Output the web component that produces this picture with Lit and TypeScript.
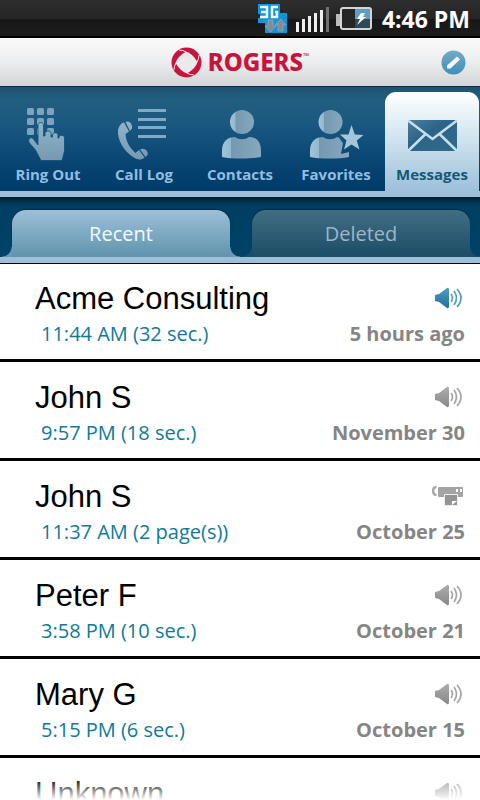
import { LitElement, html, css, svg, nothing } from "lit";
import { customElement } from "lit/decorators.js";
import { classMap } from "lit/directives/class-map.js";

type Kind = "voice" | "fax";
interface Message {
  name: string;
  detail?: string;
  date?: string;
  kind: Kind;
  unread?: boolean;
}

const MESSAGES: Message[] = [
  { name: "Acme Consulting", detail: "11:44 AM (32 sec.)", date: "5 hours ago", kind: "voice", unread: true },
  { name: "John S", detail: "9:57 PM (18 sec.)", date: "November 30", kind: "voice" },
  { name: "John S", detail: "11:37 AM (2 page(s))", date: "October 25", kind: "fax" },
  { name: "Peter F", detail: "3:58 PM (10 sec.)", date: "October 21", kind: "voice" },
  { name: "Mary G", detail: "5:15 PM (6 sec.)", date: "October 15", kind: "voice" },
  { name: "Unknown", kind: "voice" },
];

const pale = svg`<defs>
  <linearGradient id="p" x1="0" y1="0" x2="0" y2="1"><stop offset="0" stop-color="#8fb4cb"/><stop offset="1" stop-color="#7699b0"/></linearGradient>
  <linearGradient id="s" x1="0" y1="0" x2="1" y2="0"><stop offset="0" stop-color="#9fc3d9"/><stop offset=".22" stop-color="#94b9cf"/><stop offset=".24" stop-color="#7599b1"/><stop offset="1" stop-color="#86a8bd"/></linearGradient>
</defs>`;

const NAV = [
  {
    label: "Ring Out",
    icon: svg`${pale}
      <g fill="#7da3bd">
        ${[0, 10, 20].map((y) => [0, 10, 20].map((x) => svg`<rect x=${4 + x} y=${3 + y} width="7" height="7" rx="1.5"/>`))}
      </g>
      <path fill="url(#p)" stroke="#0f4c74" stroke-width=".8" d="M15 40V20.500C15 16.500 20.500 16.500 20.500 20.500V31H22V28.500C22 25 28 25 28 28.500V32H29.500V30C29.500 27 35 27 35 30V33H36V32.500C36 29.500 41.500 29.500 41.500 33V46L39 55.500H18L12.500 45L6.500 38C4 34.500 7.500 31.500 10 33.500Z"/>`,
  },
  {
    label: "Call Log",
    icon: svg`${pale}
      <g fill="#7fa9c8"><path d="M19 4h28v3H19zM19 13h28v3H19zM19 21h28v3H19zM19 30h28v3H19z"/></g>
      <g fill="url(#p)">
        <path d="M-1 25C0 21 2 18 5 17.500L10 26.500L6.500 29C7 37 11 43 16.500 48L20 45L25.500 52.500C22 55.500 18 55 14 52C5 46-2 35-1 25Z"/>
        <path d="M6.500 17C10 15 14 19 13 23.500L11 26ZM21 44.500C25 42 30 46 28.500 50L26.500 52Z"/>
      </g>`,
  },
  {
    label: "Contacts",
    icon: svg`${pale}
      <circle cx="27" cy="17" r="12" fill="url(#s)"/>
      <path fill="url(#s)" d="M7 52V46C7 36 13 32 20 32C24 35 30 35 34 32C41 32 46 36 46 46V52C36 54 17 54 7 52Z"/>`,
  },
  {
    label: "Favorites",
    icon: svg`${pale}
      <circle cx="19.500" cy="17" r="12" fill="url(#s)"/>
      <path fill="url(#s)" d="M-1 52V46C-1 36 5 32 12 32C16 35 22 35 26 32C29 32 29 35 32 38L30 49L38 47V52C28 54 9 54-1 52Z"/>
      <path fill="#a5c5dc" d="M40.500 20L43.800 29.500L52.500 30L45.800 35.500L48.500 44.500L40.500 39.500L33 44.500L35.500 35.500L29 29.500L37.500 29.500Z"/>`,
  },
  {
    label: "Messages",
    icon: svg`<defs><linearGradient id="e" x1="0" y1="0" x2="1" y2="1"><stop offset="0" stop-color="#4f7f9e"/><stop offset=".4" stop-color="#2c6488"/><stop offset="1" stop-color="#34698d"/></linearGradient></defs>
      <rect x="1" y="15" width="49" height="31" fill="url(#e)"/>
      <path d="M1 15.500L25.500 34L50 15.500M1 46L18.500 29M50 46L32.500 29" fill="none" stroke="#c5e0ef" stroke-width="2.500"/>`,
  },
];

@customElement("status-bar")
class StatusBar extends LitElement {
  static styles = css`
    :host {
      display: flex;
      flex: none;
      align-items: center;
      justify-content: flex-end;
      height: 38px;
      padding-right: 10px;
      box-sizing: border-box;
      background: linear-gradient(#2e2e2e, #242424 50%, #181818 51%, #1c1c1c 95%, #000 96%);
      color: #fff;
      font: bold 23px "Open Sans", "Noto Sans", sans-serif;
    }
    svg { display: block; }
    .time { margin-left: 9px; }
  `;
  render() {
    return html`
      <svg width="118" height="38" viewBox="256 0 118 38" role="img" aria-label="3G, signal and battery">
        <path fill="#1594d8" d="M259 4h22v9h7v20h-22v-10h-7v-5h2v-4h-2z" />
        <g fill="none" stroke="#e9f6fc" stroke-width="2.500">
          <path d="M261 7h7v10h-7M262 12h6M279 7h-6v10h5v-5h-2" />
        </g>
        <path fill="#7d8f95" stroke="#a7adb0" stroke-width=".6" d="M269 20h5v6h3l-5.500 6l-5.500-6h3zM279 31v-6h-3l5.500-6l5.500 6h-3v6z" />
        <g fill="#eee"><path d="M297 22h3v10h-3zM303 19h3v13h-3zM309 16h3v16h-3zM315 13h3v19h-3zM321 10h3v22h-3z" /></g>
        <path fill="#707070" d="M327 7h3v25h-3z" />
        <path fill="#bbb" d="M337 14h4v12h-4z" />
        <rect x="342" y="8" width="30" height="21" rx="2" fill="#262626" stroke="#d5d5d5" stroke-width="2" />
        <path fill="#5f9fc0" d="M356 9h15v19h-15z" />
        <path fill="#2f4b58" d="M356 19h15v9h-15z" />
        <path fill="#fff" d="M362 13h4l-2 4h3l-9 8l3-6h-3z" />
      </svg>
      <span class="time">4:46 PM</span>
    `;
  }
}

@customElement("message-row")
class MessageRow extends LitElement {
  static properties = { message: { attribute: false } };
  declare message: Message;

  static styles = css`
    :host {
      display: grid;
      grid-template-columns: 1fr auto;
      grid-template-rows: 36px 34px;
      align-items: center;
      flex: none;
      height: 99px;
      box-sizing: border-box;
      padding: 18px 15px 0 35px;
      border-bottom: 3px solid #000;
      font-family: "Open Sans", "Noto Sans", sans-serif;
      white-space: nowrap;
    }
    .name { font: 31px/36px "Liberation Sans", Arial, sans-serif; color: #000; }
    .icon { justify-self: end; display: block; }
    .detail { padding-left: 6px; font-size: 20px; line-height: 34px; color: #0f7a98; }
    .date { font-size: 20px; line-height: 34px; font-weight: bold; color: #858585; text-align: right; }
  `;

  private icon() {
    const m = this.message;
    if (m.kind === "fax") {
      return html`<svg class="icon" width="33" height="24" viewBox="0 0 33 24" role="img" aria-label="Fax">
        <path d="M4.500 2C0 2 0 10 4.500 10" fill="none" stroke="#a8a8a8" stroke-width="2.500" />
        <rect x="6" y="2" width="25" height="10" rx="1" fill="#a4a4a4" />
        <path d="M24 4h2v3h-2zM28 4h2v3h-2z" fill="#fff" />
        <path d="M12.500 9.500h13v11h-13z" fill="#959595" stroke="#eee" />
        <path d="M20 20v-4h5z" fill="#fff" />
      </svg>`;
    }
    const [a, b] = m.unread ? ["#4f9ec2", "#1f6f98"] : ["#adadad", "#888"];
    const wave = m.unread ? "#5a9cb9" : "#a5a5a5";
    return html`<svg class="icon" width="30" height="24" viewBox="0 0 30 24" role="img" aria-label="Voicemail">
      <defs><linearGradient id="v" x1="0" y1="0" x2="0" y2="1"><stop stop-color=${a} /><stop offset="1" stop-color=${b} /></linearGradient></defs>
      <path fill="url(#v)" d="M0 8L4 7L12 1Q14 0 14 3V19Q14 22 12 21L4 15L0 14Z" />
      <path fill="none" stroke=${wave} stroke-width="1.700" d="M16 7Q19 11 16 15M19 4Q24 11 19 18M22 2Q30 11 22 20" />
    </svg>`;
  }

  render() {
    const m = this.message;
    return html`
      <span class="name">${m.name}</span>
      ${this.icon()}
      ${m.detail ? html`<span class="detail">${m.detail}</span>` : nothing}
      ${m.date ? html`<span class="date">${m.date}</span>` : nothing}
    `;
  }
}

@customElement("app-root")
class AppRoot extends LitElement {
  static properties = { section: { state: true }, tab: { state: true } };
  declare section: string;
  declare tab: string;

  constructor() {
    super();
    this.section = "Messages";
    this.tab = "Recent";
  }

  static styles = css`
    :host {
      display: flex;
      flex-direction: column;
      position: relative;
      height: 100vh;
      overflow: hidden;
      background: #fff;
      font-family: "Open Sans", "Noto Sans", sans-serif;
    }
    button {
      border: 0;
      margin: 0;
      padding: 0;
      background: none;
      font-family: inherit;
      cursor: pointer;
    }
    svg { display: block; overflow: visible; }
    header {
      flex: none;
      display: grid;
      grid-template-columns: 1fr auto 1fr;
      align-items: center;
      height: 49px;
      box-sizing: border-box;
      padding: 0 14px;
      background: linear-gradient(#fafafa, #eeeff0 45%, #d2d5d8);
      border-bottom: 1px solid #0d2c3e;
    }
    .brand {
      grid-column: 2;
      display: flex;
      align-items: center;
      gap: 6px;
      color: #c8143c;
      font-family: "Noto Sans", "Open Sans", sans-serif;
      font-size: 24px;
      font-weight: 800;
      line-height: 30px;
    }
    .word { display: flex; }
    .tm { font-size: 8px; font-weight: 400; line-height: 18px; }
    .edit { justify-self: end; }
    nav {
      flex: none;
      display: grid;
      grid-template-columns: repeat(5, 1fr);
      height: 110px;
      box-sizing: border-box;
      padding-top: 5px;
      border-bottom: 6px solid #9dc0da;
      background: linear-gradient(#1d5270, #235e7f 12%, #1a5880 35%, #064170 80%, #003c69);
    }
    .item {
      display: flex;
      flex-direction: column;
      align-items: center;
      padding-top: 13px;
      color: #8fbfe0;
      font-size: 15px;
      font-weight: bold;
      line-height: 20px;
      gap: 3px;
    }
    .item.on {
      margin: 0 1px;
      border-radius: 11px 11px 0 0;
      background: linear-gradient(#fff, #dcebf4 35%, #9dc0da);
      color: #14597b;
    }
    .tabs {
      flex: none;
      position: relative;
      display: grid;
      grid-template-columns: 1fr 1fr;
      column-gap: 22px;
      height: 66px;
      box-sizing: border-box;
      padding: 13px 10px 0 12px;
      border-bottom: 6px solid #9dc0da;
      box-shadow: 0 1px 0 #000;
      background: linear-gradient(#001a28, #00344f 5px, #003f63 10px, #004268);
    }
    .tab {
      position: relative;
      border-radius: 14px 14px 0 0;
      background: linear-gradient(#426e83, #1c4c66);
      box-shadow: 0 -1px 1px #002a40;
      color: #9fb6c4;
      font-size: 20px;
      line-height: 28px;
      --flare: #1c4c66;
    }
    .tab.on {
      background: linear-gradient(#9dc0d8, #6193ad);
      color: #f2fbff;
      --flare: #6a9ab5;
    }
    .tab::before,
    .tab::after {
      content: "";
      position: absolute;
      bottom: 0;
      width: 10px;
      height: 10px;
    }
    .tab::before { right: 100%; background: radial-gradient(circle at 0 0, transparent 9px, var(--flare) 10px); }
    .tab::after { left: 100%; background: radial-gradient(circle at 100% 0, transparent 9px, var(--flare) 10px); }
    main {
      flex: 1;
      min-height: 0;
      display: flex;
      flex-direction: column;
      overflow: hidden;
    }
    .fade {
      position: absolute;
      inset: auto 0 0 0;
      height: 22px;
      background: linear-gradient(rgba(255, 255, 255, 0), #fff);
      pointer-events: none;
    }
  `;

  render() {
    return html`
      <status-bar></status-bar>
      <header>
        <div class="brand">
          <svg width="31" height="31" viewBox="0 0 31 31" aria-hidden="true">
            <circle cx="15.500" cy="15.500" r="15" fill="#c8143c" />
            <path fill="#e9eaec" d="M15 4.500Q21 6 26.500 15Q25 21 16 26.500Q10 25 4.500 16Q6 10 15 4.500Z" />
            <path fill="none" stroke="#e9eaec" stroke-width="1" d="M15 5Q12 3 8 3M26 15Q28 12 28 8M16 26Q19 28 23 28M5 16Q3 19 3 23" />
          </svg>
          <span class="word">ROGERS<span class="tm">™</span></span>
        </div>
        <button class="edit" aria-label="Edit">
          <svg width="25" height="25" viewBox="0 0 25 25">
            <defs><linearGradient id="b" x1="0" y1="0" x2="0" y2="1"><stop stop-color="#74aac8" /><stop offset="1" stop-color="#3f8fb9" /></linearGradient></defs>
            <circle cx="12.500" cy="12.500" r="12" fill="url(#b)" />
            <path d="M6 18.500V15.500L16 6.500L19 9.500L9.500 18.500Z" fill="#f4fafc" />
          </svg>
        </button>
      </header>
      <nav>
        ${NAV.map(
          (n) => html`<button
            class=${classMap({ item: true, on: n.label === this.section })}
            @click=${() => (this.section = n.label)}
          >
            <svg width="51" height="56" viewBox="0 0 51 56" aria-hidden="true">${n.icon}</svg>
            <span>${n.label}</span>
          </button>`
        )}
      </nav>
      <div class="tabs" role="tablist">
        ${["Recent", "Deleted"].map(
          (t) => html`<button
            role="tab"
            aria-selected=${t === this.tab}
            class=${classMap({ tab: true, on: t === this.tab })}
            @click=${() => (this.tab = t)}
          >${t}</button>`
        )}
      </div>
      <main>
        ${this.tab === "Recent" ? MESSAGES.map((m) => html`<message-row .message=${m}></message-row>`) : nothing}
      </main>
      <div class="fade"></div>
    `;
  }
}
